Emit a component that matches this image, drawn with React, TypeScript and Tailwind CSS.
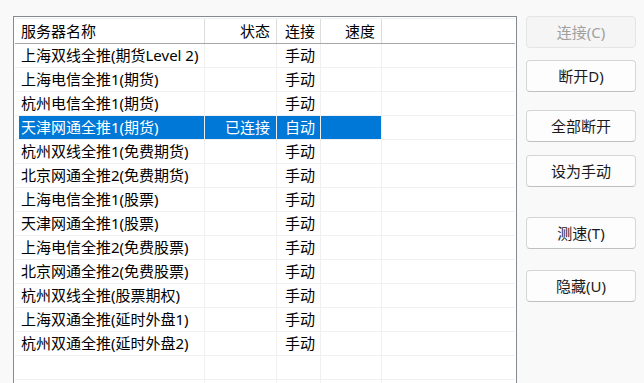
import React from "react";

type Row = { name: string; status?: string; conn: string; sel?: boolean };

const rows: Row[] = [
  { name: "上海双线全推(期货Level 2)", conn: "手动" },
  { name: "上海电信全推1(期货)", conn: "手动" },
  { name: "杭州电信全推1(期货)", conn: "手动" },
  { name: "天津网通全推1(期货)", status: "已连接", conn: "自动", sel: true },
  { name: "杭州双线全推1(免费期货)", conn: "手动" },
  { name: "北京网通全推2(免费期货)", conn: "手动" },
  { name: "上海电信全推1(股票)", conn: "手动" },
  { name: "天津网通全推1(股票)", conn: "手动" },
  { name: "上海电信全推2(免费股票)", conn: "手动" },
  { name: "北京网通全推2(免费股票)", conn: "手动" },
  { name: "杭州双线全推(股票期权)", conn: "手动" },
  { name: "上海双通全推(延时外盘1)", conn: "手动" },
  { name: "杭州双通全推(延时外盘2)", conn: "手动" },
  { name: "", conn: "" },
  { name: "", conn: "" },
];

function Btn({ label, disabled, className = "" }: { label: string; disabled?: boolean; className?: string }) {
  return (
    <div
      className={
        "h-[32px] w-[110px] rounded-[4px] border flex items-center justify-center text-[15px] leading-none " +
        (disabled
          ? "bg-[#f5f5f5] border-[#e5e5e5] text-[#a0a0a0] "
          : "bg-[#fdfdfd] border-[#d5d5d5] border-b-[#c0c0c0] text-[#1b1b1b] ") +
        className
      }
    >
      {label}
    </div>
  );
}

export default function App() {
  return (
    <div className="w-[644px] h-[383px] bg-[#f9f9f9] flex pt-[16px] pl-[13px] overflow-hidden font-['Noto_Sans','Noto_Sans_CJK_SC',sans-serif] text-[15px] text-black">
      <div className="w-[504px] h-[380px] shrink-0 border-l border-t border-r border-[#868a91] bg-white p-px flex flex-col overflow-hidden">
        <div className="h-[26px] shrink-0 flex border-b border-[#a8a8a8] border-t border-t-[#f0f0f0] leading-none">
          <div className="w-[190px] border-r border-[#dcdcdc] flex items-center pl-[6px]">服务器名称</div>
          <div className="w-[72px] border-r border-[#dcdcdc] flex items-center justify-end pr-[6px]">状态</div>
          <div className="w-[44px] border-r border-[#dcdcdc] flex items-center pl-[8px]">连接</div>
          <div className="w-[61px] border-r border-[#dcdcdc] flex items-center justify-end pr-[6px]">速度</div>
          <div className="flex-1" />
        </div>
        {rows.map((r, i) => (
          <div key={i} className="h-[24px] shrink-0 flex border-b border-[#f0f0f0] leading-none">
            <div className="w-[190px] border-r border-[#f0f0f0] flex">
              <div className={"flex-1 ml-[4px] flex items-center pl-[2px] whitespace-nowrap " + (r.sel ? "bg-[#0078d7] text-white" : "")}>
                {r.name}
              </div>
            </div>
            <div className={"w-[72px] border-r border-[#f0f0f0] flex items-center justify-end pr-[6px] " + (r.sel ? "bg-[#0078d7] text-white" : "")}>
              {r.status ?? ""}
            </div>
            <div className={"w-[44px] border-r border-[#f0f0f0] flex items-center pl-[8px] whitespace-nowrap " + (r.sel ? "bg-[#0078d7] text-white" : "")}>
              {r.conn}
            </div>
            <div className={"w-[61px] border-r border-[#f0f0f0] " + (r.sel ? "bg-[#0078d7]" : "")} />
            <div className="flex-1" />
          </div>
        ))}
      </div>
      <div className="ml-[9px] flex flex-col">
        <Btn label="连接(C)" disabled />
        <Btn label="断开D)" className="mt-[12px]" />
        <Btn label="全部断开" className="mt-[18px]" />
        <Btn label="设为手动" className="mt-[13px]" />
        <Btn label="测速(T)" className="mt-[30px]" />
        <Btn label="隐藏(U)" className="mt-[21px]" />
      </div>
    </div>
  );
}
